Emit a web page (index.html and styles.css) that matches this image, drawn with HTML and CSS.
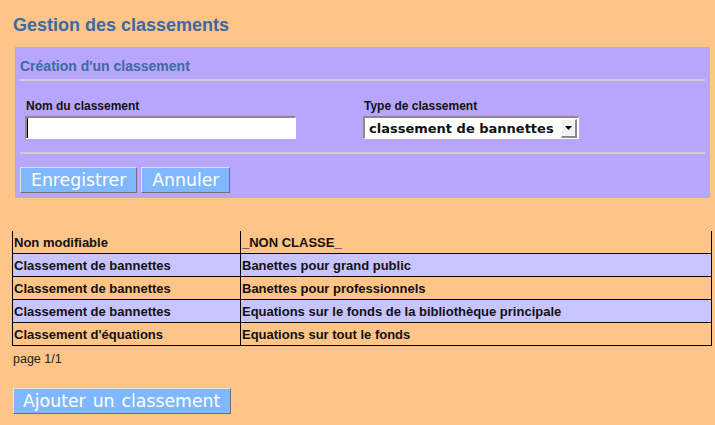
FILE: index.html
```html
<!DOCTYPE html>
<html lang="fr">
<head>
<meta charset="utf-8">
<title>Gestion des classements</title>
<link rel="stylesheet" href="styles.css">
</head>
<body>
<div class="page">
  <h1 class="title">Gestion des classements</h1>
  <form class="panel">
    <h3 class="panel-title">Création d'un classement</h3>
    <div class="rule"></div>
    <div class="fields">
      <div class="field field-name">
        <label class="label">Nom du classement</label>
        <input class="text-input" type="text">
      </div>
      <div class="field">
        <label class="label">Type de classement</label>
        <div class="select">
          <span class="select-value">classement de bannettes</span>
          <span class="select-arrow"><svg width="7" height="4" viewBox="0 0 7 4"><path d="M0 0H7L3.5 4Z" fill="#000"/></svg></span>
        </div>
      </div>
    </div>
    <div class="rule rule-2"></div>
    <div class="actions">
      <button type="button" class="btn">Enregistrer</button>
      <button type="button" class="btn">Annuler</button>
    </div>
  </form>

  <table class="list">
    <tr class="odd"><td class="c1">Non modifiable</td><td>_NON CLASSE_</td></tr>
    <tr class="even"><td class="c1">Classement de bannettes</td><td>Banettes pour grand public</td></tr>
    <tr class="odd"><td class="c1">Classement de bannettes</td><td>Banettes pour professionnels</td></tr>
    <tr class="even"><td class="c1">Classement de bannettes</td><td>Equations sur le fonds de la bibliothèque principale</td></tr>
    <tr class="odd"><td class="c1">Classement d'équations</td><td>Equations sur tout le fonds</td></tr>
  </table>
  <div class="pager">page 1/1</div>
  <button type="button" class="btn btn-add">Ajouter un classement</button>
</div>
</body>
</html>
```

FILE: styles.css
```css
html, body {
  margin: 0;
  padding: 0;
  background: #ffc488;
}
body {
  font-family: "Liberation Sans", Arial, sans-serif;
  color: #111;
}
.page {
  padding: 15px 3px 10px 12px;
}
.title {
  margin: 0 0 0 1px;
  font-size: 18px;
  line-height: 21px;
  font-weight: bold;
  color: #3a6aa4;
}
.panel {
  margin: 11px 2px 0 3px;
  background: #b8a5fd;
  padding: 11px 5px 5px 5px;
}
.panel-title {
  margin: 0;
  font-size: 14px;
  line-height: 16px;
  font-weight: bold;
  color: #3a6aa4;
}
.rule {
  height: 2px;
  background: #cfcfcf;
  margin-top: 5px;
}
.fields {
  display: flex;
  padding: 18px 0 0 5px;
}
.field {
  display: flex;
  flex-direction: column;
  align-items: flex-start;
}
.field-name {
  width: 338px;
}
.label {
  font-size: 12px;
  line-height: 14px;
  font-weight: bold;
  color: #111;
  margin-bottom: 3px;
  padding-left: 1px;
}
.text-input {
  box-sizing: border-box;
  width: 271px;
  height: 23px;
  margin: 0;
  padding: 0;
  background: #fff;
  border-style: solid;
  border-width: 2px 1px 1px 2px;
  border-color: #8a8a8a #ffffff #ffffff #8a8a8a;
  box-shadow: inset 1px 0 0 #000;
  outline: none;
}
.select {
  box-sizing: border-box;
  width: 216px;
  height: 23px;
  display: flex;
  align-items: center;
  background: #fff;
  border-style: solid;
  border-width: 2px 1px 1px 2px;
  border-color: #8a8a8a #ffffff #ffffff #8a8a8a;
  padding-left: 4px;
}
.select-value {
  flex: 1;
  font-family: "DejaVu Sans", sans-serif;
  font-weight: bold;
  font-size: 13px;
  color: #111;
}
.select-arrow {
  box-sizing: border-box;
  width: 16px;
  height: 19px;
  margin-right: 1px;
  display: flex;
  align-items: center;
  justify-content: center;
  background: #f2f2ee;
  border-style: solid;
  border-width: 1px 2px 2px 1px;
  border-color: #ffffff #8a8a8a #8a8a8a #ffffff;
}
.rule-2 {
  margin-top: 13px;
}
.actions {
  display: flex;
  gap: 4px;
  margin-top: 13px;
}
.btn {
  box-sizing: border-box;
  height: 26px;
  margin: 0;
  padding: 0 10px;
  background: #80b8ff;
  color: #fff;
  font-family: "DejaVu Sans", sans-serif;
  font-size: 17.3px;
  line-height: 22px;
  border-style: solid;
  border-width: 1px;
  border-color: #e2e2e2 #707070 #707070 #e2e2e2;
}
.list {
  margin-top: 33px;
  width: 700px;
  border-collapse: collapse;
  font-size: 13px;
  font-weight: bold;
  color: #111;
}
.list td {
  height: 22px;
  padding: 0 0 0 1px;
  border-left: 1px solid #000;
  border-right: 1px solid #000;
  border-bottom: 1px solid #000;
  vertical-align: middle;
}
.list .c1 {
  width: 226px;
}
.list tr.even td {
  background: #c8c4ff;
}
.pager {
  margin: 6px 0 0 1px;
  font-size: 12.5px;
  line-height: 14px;
  color: #222;
}
.btn-add {
  margin: 22px 0 0 1px;
  height: 26px;
  padding: 0 10px 0 9px;
  word-spacing: 1.5px;
}
```
